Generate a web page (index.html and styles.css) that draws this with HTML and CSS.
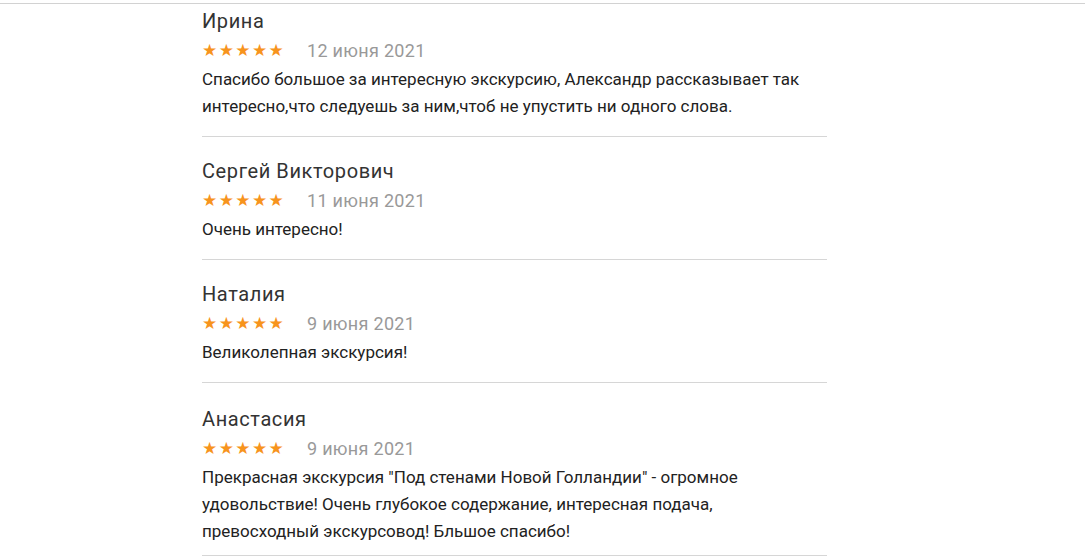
FILE: index.html
```html
<!DOCTYPE html>
<html lang="ru">
<head>
<meta charset="utf-8">
<title>Отзывы</title>
<link rel="stylesheet" href="styles.css">
</head>
<body>
<div class="topbar"></div>
<div class="reviews">
  <div class="review">
    <div class="name">Ирина</div>
    <div class="meta"><span class="stars">★★★★★</span><span class="date">12 июня 2021</span></div>
    <div class="text">Спасибо большое за интересную экскурсию, Александр рассказывает так интересно,что следуешь за ним,чтоб не упустить ни одного слова.</div>
  </div>
  <div class="review">
    <div class="name">Сергей Викторович</div>
    <div class="meta"><span class="stars">★★★★★</span><span class="date">11 июня 2021</span></div>
    <div class="text">Очень интересно!</div>
  </div>
  <div class="review">
    <div class="name">Наталия</div>
    <div class="meta"><span class="stars">★★★★★</span><span class="date">9 июня 2021</span></div>
    <div class="text">Великолепная экскурсия!</div>
  </div>
  <div class="review">
    <div class="name">Анастасия</div>
    <div class="meta"><span class="stars">★★★★★</span><span class="date">9 июня 2021</span></div>
    <div class="text">Прекрасная экскурсия "Под стенами Новой Голландии" - огромное удовольствие! Очень глубокое содержание, интересная подача, превосходный экскурсовод! Бльшое спасибо!</div>
  </div>
</div>
</body>
</html>
```
FILE: styles.css
```css
html, body {
  margin: 0;
  padding: 0;
  background: #fff;
}
body {
  font-family: Roboto, "Liberation Sans", sans-serif;
  color: #333;
}
.topbar {
  height: 3px;
  border-bottom: 1px solid #d2d2d2;
}
.reviews {
  margin-left: 202px;
  width: 625px;
}
.review {
  padding: 22px 0 16px;
  border-bottom: 1px solid #d6d6d6;
}
.review:first-child {
  padding-top: 5px;
}
.review:last-child {
  padding-top: 24px;
  padding-bottom: 10px;
}
.name {
  font-size: 20px;
  line-height: 24px;
  color: #333;
  letter-spacing: 0.6px;
}
.meta {
  margin-top: 5px;
  display: flex;
  align-items: center;
  height: 24px;
}
.stars {
  color: #f7941d;
  font-family: "DejaVu Sans", sans-serif;
  font-size: 17px;
  letter-spacing: 1.4px;
  width: 105px;
}
.date {
  font-size: 18px;
  letter-spacing: 0.3px;
  color: #999;
}
.text {
  margin-top: 4px;
  font-size: 17px;
  line-height: 27px;
  color: #222;
}
```
